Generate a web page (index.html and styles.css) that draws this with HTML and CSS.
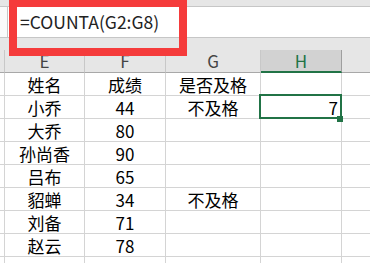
FILE: index.html
```html
<!DOCTYPE html>
<html lang="zh-CN">
<head>
  <meta charset="UTF-8">
  <title>COUNTA</title>
  <link rel="stylesheet" href="styles.css">
</head>
<body>
  <div class="formula-area">
    <div class="ribbon-edge"></div>
    <div class="formula-bar">
      <div class="name-stub"></div>
      <div class="formula-input">=COUNTA(G2:G8)</div>
    </div>
  </div>

  <div class="sheet">
    <div class="header-gap"></div>
    <div class="grid">
      <div class="col-head stub"></div>
      <div class="col-head">E</div>
      <div class="col-head">F</div>
      <div class="col-head">G</div>
      <div class="col-head active">H</div>
      <div class="col-head last"></div>

      <div class="cell stub"></div><div class="cell">姓名</div><div class="cell">成绩</div><div class="cell">是否及格</div><div class="cell"></div><div class="cell last"></div>
      <div class="cell stub"></div><div class="cell">小乔</div><div class="cell">44</div><div class="cell">不及格</div><div class="cell num selected">7</div><div class="cell last"></div>
      <div class="cell stub"></div><div class="cell">大乔</div><div class="cell">80</div><div class="cell"></div><div class="cell"></div><div class="cell last"></div>
      <div class="cell stub"></div><div class="cell">孙尚香</div><div class="cell">90</div><div class="cell"></div><div class="cell"></div><div class="cell last"></div>
      <div class="cell stub"></div><div class="cell">吕布</div><div class="cell">65</div><div class="cell"></div><div class="cell"></div><div class="cell last"></div>
      <div class="cell stub"></div><div class="cell">貂蝉</div><div class="cell">34</div><div class="cell">不及格</div><div class="cell"></div><div class="cell last"></div>
      <div class="cell stub"></div><div class="cell">刘备</div><div class="cell">71</div><div class="cell"></div><div class="cell"></div><div class="cell last"></div>
      <div class="cell stub"></div><div class="cell">赵云</div><div class="cell">78</div><div class="cell"></div><div class="cell"></div><div class="cell last"></div>
      <div class="cell stub short"></div><div class="cell short"></div><div class="cell short"></div><div class="cell short"></div><div class="cell short"></div><div class="cell last short"></div>
    </div>
  </div>

  <div class="highlight"></div>
</body>
</html>
```

FILE: styles.css
```css
* { box-sizing: border-box; margin: 0; padding: 0; }
body {
  font-family: "Noto Sans CJK SC", "Noto Sans", sans-serif;
  font-size: 17px;
  color: #000;
  background: #fff;
  width: 370px;
  height: 263px;
  overflow: hidden;
  position: relative;
}

.ribbon-edge {
  height: 7px;
  background: #e6e6e6;
  border-bottom: 1px solid #c6c6c6;
}
.formula-bar {
  display: flex;
  height: 31px;
  border-bottom: 1px solid #c6c6c6;
}
.name-stub {
  width: 8px;
  background: #fafafa;
  border-right: 1px solid #c6c6c6;
}
.formula-input {
  padding-left: 12px;
  line-height: 30px;
  color: #222;
  font-size: 17.5px;
}

.header-gap {
  height: 12px;
  background: #e6e6e6;
}
.grid {
  display: grid;
  grid-template-columns: 5px 80px 81px 95px 81px 1fr;
  grid-template-rows: repeat(9, 23px) 6px;
}
.col-head {
  background: #e6e6e6;
  border-right: 1px solid #c8c8c8;
  border-bottom: 1px solid #a8a8a8;
  text-align: center;
  line-height: 22px;
  color: #444;
}
.col-head.active {
  background: #d2d2d2;
  color: #217346;
  border-right-color: #9f9f9f;
  border-bottom: 2px solid #217346;
}
.col-head.last { border-right: none; }

.cell {
  border-right: 1px solid #d4d4d4;
  border-bottom: 1px solid #d4d4d4;
  display: flex;
  align-items: flex-end;
  justify-content: center;
  line-height: 20px;
  white-space: nowrap;
}
.cell.last { border-right: none; }
.cell.short { border-bottom: none; }
.cell.num {
  justify-content: flex-end;
  padding-right: 3px;
}
.cell.selected { position: relative; }
.cell.selected::after {
  content: "";
  position: absolute;
  top: -2px;
  left: -2px;
  right: -1px;
  bottom: -1px;
  border: 2px solid #217346;
}
.cell.selected::before {
  content: "";
  position: absolute;
  right: -2px;
  bottom: -4px;
  width: 6px;
  height: 6px;
  background: #217346;
  z-index: 1;
}

.highlight {
  position: absolute;
  left: 9px;
  top: -1px;
  width: 178px;
  height: 57px;
  border: 8px solid #f53b3b;
}
```
